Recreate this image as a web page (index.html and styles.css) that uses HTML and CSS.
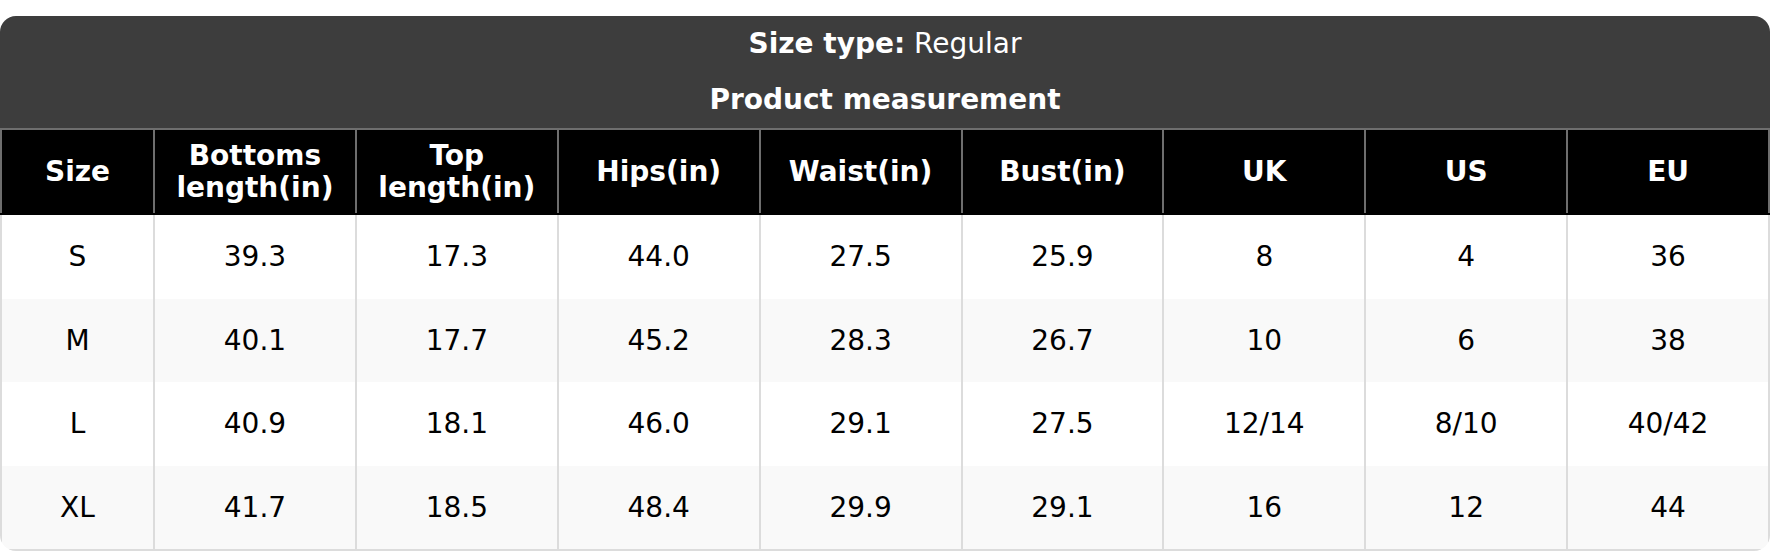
FILE: index.html
```html
<!DOCTYPE html>
<html>
<head>
<meta charset="utf-8">
<link rel="stylesheet" href="styles.css">
</head>
<body>
<div class="card">
  <div class="band">
    <div class="band-line"><b>Size type:</b> Regular</div>
    <div class="band-line"><b>Product measurement</b></div>
  </div>
  <table class="sizes">
    <colgroup>
      <col class="c-first"><col><col><col><col><col><col><col><col>
    </colgroup>
    <thead>
      <tr>
        <th>Size</th><th>Bottoms<br>length(in)</th><th>Top<br>length(in)</th><th>Hips(in)</th><th>Waist(in)</th><th>Bust(in)</th><th>UK</th><th>US</th><th>EU</th>
      </tr>
    </thead>
    <tbody>
      <tr><td>S</td><td>39.3</td><td>17.3</td><td>44.0</td><td>27.5</td><td>25.9</td><td>8</td><td>4</td><td>36</td></tr>
      <tr><td>M</td><td>40.1</td><td>17.7</td><td>45.2</td><td>28.3</td><td>26.7</td><td>10</td><td>6</td><td>38</td></tr>
      <tr><td>L</td><td>40.9</td><td>18.1</td><td>46.0</td><td>29.1</td><td>27.5</td><td>12/14</td><td>8/10</td><td>40/42</td></tr>
      <tr><td>XL</td><td>41.7</td><td>18.5</td><td>48.4</td><td>29.9</td><td>29.1</td><td>16</td><td>12</td><td>44</td></tr>
    </tbody>
  </table>
</div>
</body>
</html>
```
FILE: styles.css
```css
html, body {
  margin: 0;
  padding: 0;
  background: #fff;
}
body {
  padding-top: 16px;
  font-family: "DejaVu Sans", Verdana, sans-serif;
  font-size: 28px;
}
.card {
  width: 1770px;
  border-radius: 16px;
  overflow: hidden;
  box-sizing: border-box;
}
.band {
  background: #3d3d3d;
  color: #fff;
  text-align: center;
}
.band-line {
  height: 56px;
  line-height: 56px;
}
.sizes {
  width: 100%;
  border-collapse: collapse;
  table-layout: fixed;
}
.c-first {
  width: 153px;
}
.sizes th {
  background: #000;
  color: #fff;
  font-weight: bold;
  line-height: 32px;
  padding: 10px 4px 9px;
  border: 2px solid #6e6e6e;
  border-bottom-color: #000;
}
.sizes td {
  color: #000;
  text-align: center;
  line-height: 32px;
  padding: 26px 4px 25.5px;
  border: 2px solid #dcdcdc;
  border-top: none;
  border-bottom: none;
}
.sizes tbody tr:nth-child(odd) td {
  background: #fff;
}
.sizes tbody tr:nth-child(even) td {
  background: #f9f9f9;
}
.sizes tbody tr:last-child td {
  border-bottom: 2px solid #dcdcdc;
}
.sizes th:first-child {
  border-left-color: #6e6e6e;
}
```
